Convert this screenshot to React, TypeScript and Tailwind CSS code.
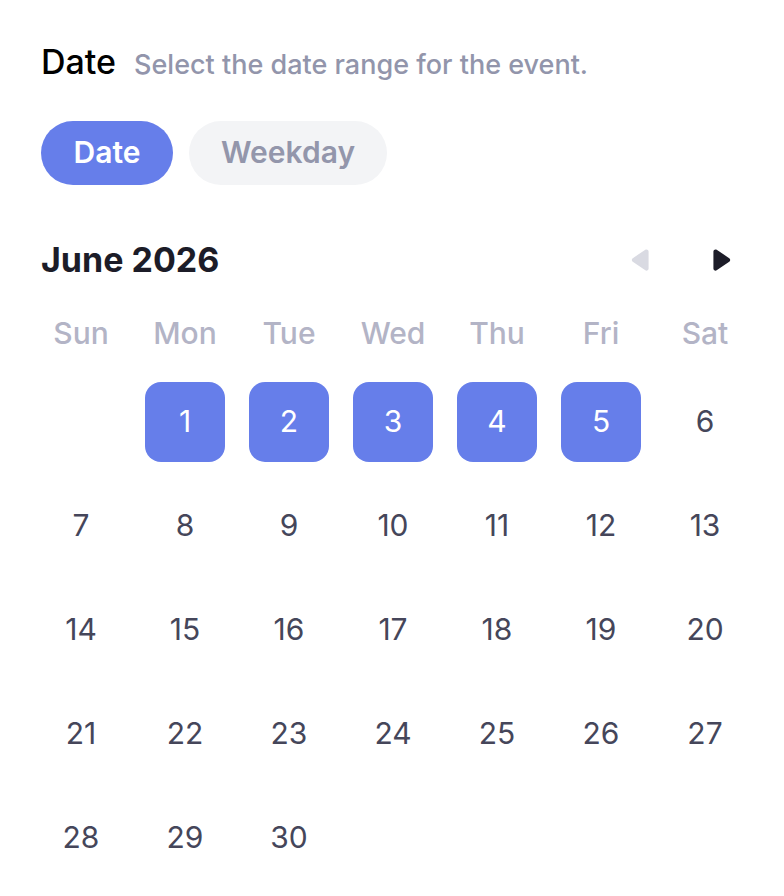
import { useState } from 'react';

const WEEKDAYS = ['Sun', 'Mon', 'Tue', 'Wed', 'Thu', 'Fri', 'Sat'];

// June 2026 starts on a Monday
const FIRST_OFFSET = 1;
const DAYS_IN_MONTH = 30;

const Triangle = ({ dir, color }: { dir: 'left' | 'right'; color: string }) => (
    <svg width="24" height="26" viewBox="0 0 22 24" fill={color}>
        {dir === 'right' ? (
            <path d="M4 4.2C4 2.6 5.7 1.7 7 2.5l11.6 7.8c1.2.8 1.2 2.6 0 3.4L7 21.5c-1.3.9-3-.1-3-1.7V4.2z" />
        ) : (
            <path d="M18 4.2c0-1.6-1.7-2.5-3-1.7L3.4 10.3c-1.2.8-1.2 2.6 0 3.4L15 21.5c1.3.9 3-.1 3-1.7V4.2z" />
        )}
    </svg>
);

const App = () => {
    const [mode, setMode] = useState<'date' | 'weekday'>('date');
    const [selected] = useState<number[]>([1, 2, 3, 4, 5]);

    const cells: (number | null)[] = [
        ...Array.from({ length: FIRST_OFFSET }, () => null),
        ...Array.from({ length: DAYS_IN_MONTH }, (_, i) => i + 1),
    ];

    return (
        <div
            className="w-[784px] h-[896px] bg-white pl-[41px] pr-[39px] pt-[40px]"
            style={{ fontFamily: 'Inter, "Noto Sans", sans-serif' }}
        >
            <div className="flex items-baseline gap-[18px]">
                <div className="text-[34px] font-medium text-black leading-[44px]">Date</div>
                <div className="text-[27px] font-medium text-[#9295ab]">
                    Select the date range for the event.
                </div>
            </div>

            <div className="flex gap-4 mt-[35px]">
                <button
                    onClick={() => setMode('date')}
                    className={`h-16 w-[132px] rounded-full text-[30px] font-semibold ${
                        mode === 'date' ? 'bg-[#667eea] text-white' : 'bg-[#f3f4f6] text-[#9396ab]'
                    }`}
                >
                    Date
                </button>
                <button
                    onClick={() => setMode('weekday')}
                    className={`h-16 w-[198px] rounded-full text-[30px] font-semibold ${
                        mode === 'weekday' ? 'bg-[#667eea] text-white' : 'bg-[#f3f4f6] text-[#9396ab]'
                    }`}
                >
                    Weekday
                </button>
            </div>

            <div className="flex items-center justify-between mt-[53px] h-[44px]">
                <div className="text-[34px] font-bold text-[#1c1c28]">June 2026</div>
                <div className="flex items-center gap-[56px] pr-[12px]">
                    <button className="cursor-default">
                        <Triangle dir="left" color="#d9dae2" />
                    </button>
                    <button>
                        <Triangle dir="right" color="#1c1c28" />
                    </button>
                </div>
            </div>

            <div className="-mx-3 mt-[32px] grid grid-cols-7">
                {WEEKDAYS.map((d) => (
                    <div
                        key={d}
                        className="h-[40px] flex items-center justify-center text-[30px] font-medium text-[#b3b4c6]"
                    >
                        {d}
                    </div>
                ))}
            </div>

            <div className="-mx-3 mt-[16px] grid grid-cols-7">
                {cells.map((day, i) => (
                    <div key={i} className="h-[104px] flex items-center justify-center">
                        {day !== null && (
                            <div
                                className={`w-20 h-20 rounded-2xl flex items-center justify-center text-[30px] ${
                                    selected.includes(day)
                                        ? 'bg-[#667eea] text-white'
                                        : 'text-[#45465a]'
                                }`}
                            >
                                {day}
                            </div>
                        )}
                    </div>
                ))}
            </div>
        </div>
    );
};

export default App;
